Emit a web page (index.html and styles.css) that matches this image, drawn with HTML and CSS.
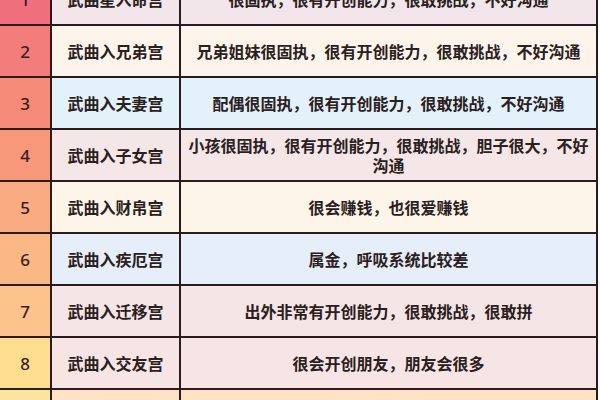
FILE: index.html
```html
<!DOCTYPE html>
<html lang="zh">
<head>
<meta charset="utf-8">
<link rel="stylesheet" href="styles.css">
</head>
<body>
<div class="table">
  <div class="num n1">1</div><div class="name r1">武曲星入命宫</div><div class="desc r1">很固执，很有开创能力，很敢挑战，不好沟通</div>
  <div class="num n2">2</div><div class="name r2">武曲入兄弟宫</div><div class="desc r2">兄弟姐妹很固执，很有开创能力，很敢挑战，不好沟通</div>
  <div class="num n3">3</div><div class="name r3">武曲入夫妻宫</div><div class="desc r3">配偶很固执，很有开创能力，很敢挑战，不好沟通</div>
  <div class="num n4">4</div><div class="name r4">武曲入子女宫</div><div class="desc r4">小孩很固执，很有开创能力，很敢挑战，胆子很大，不好沟通</div>
  <div class="num n5">5</div><div class="name r5">武曲入财帛宫</div><div class="desc r5">很会赚钱，也很爱赚钱</div>
  <div class="num n6">6</div><div class="name r6">武曲入疾厄宫</div><div class="desc r6">属金，呼吸系统比较差</div>
  <div class="num n7">7</div><div class="name r7">武曲入迁移宫</div><div class="desc r7">出外非常有开创能力，很敢挑战，很敢拼</div>
  <div class="num n8">8</div><div class="name r8">武曲入交友宫</div><div class="desc r8">很会开创朋友，朋友会很多</div>
  <div class="num n9">9</div><div class="name r9">武曲入官禄宫</div><div class="desc r9">事业心很强，很有开创能力</div>
</div>
</body>
</html>
```
FILE: styles.css
```css
html, body {
  margin: 0;
  padding: 0;
  background: #ffffff;
  overflow: hidden;
}
.table {
  display: grid;
  grid-template-columns: 50px 127px 415px;
  grid-auto-rows: 50px;
  gap: 2px;
  width: 596px;
  margin-top: -26px;
  background: #2a1c1c;
  border-right: 2px solid #2a1c1c;
  border-bottom: 2px solid #2a1c1c;
  font-family: "Noto Sans CJK SC", "Noto Sans", sans-serif;
  color: #2a2020;
}
.num, .name, .desc {
  display: flex;
  align-items: center;
  justify-content: center;
  text-align: center;
}
.num {
  font-family: "Noto Sans", "Liberation Sans", sans-serif;
  font-size: 17px;
  font-weight: 500;
  color: #3a1c1c;
}
.name, .desc {
  font-size: 16px;
  font-weight: 700;
  line-height: 20px;
}
.desc {
  padding: 0 4px;
}
.n1 { background: #f06f7c; }
.n2 { background: #f37d7b; }
.n3 { background: #f68b7a; }
.n4 { background: #f7987a; }
.n5 { background: #f9ab82; }
.n6 { background: #fab887; }
.n7 { background: #fcc48c; }
.n8 { background: #fdde90; }
.n9 { background: #fde2a0; }
.r1 { background: #f2e6ea; }
.r2 { background: #fdf5ec; }
.r3 { background: #e3f1fb; }
.r4 { background: #f5e6e8; }
.r5 { background: #fdf4ea; }
.r6 { background: #e6eef9; }
.r7 { background: #f6e5e6; }
.r8 { background: #f7e4e5; }
.r9 { background: #fde2c6; }
```
